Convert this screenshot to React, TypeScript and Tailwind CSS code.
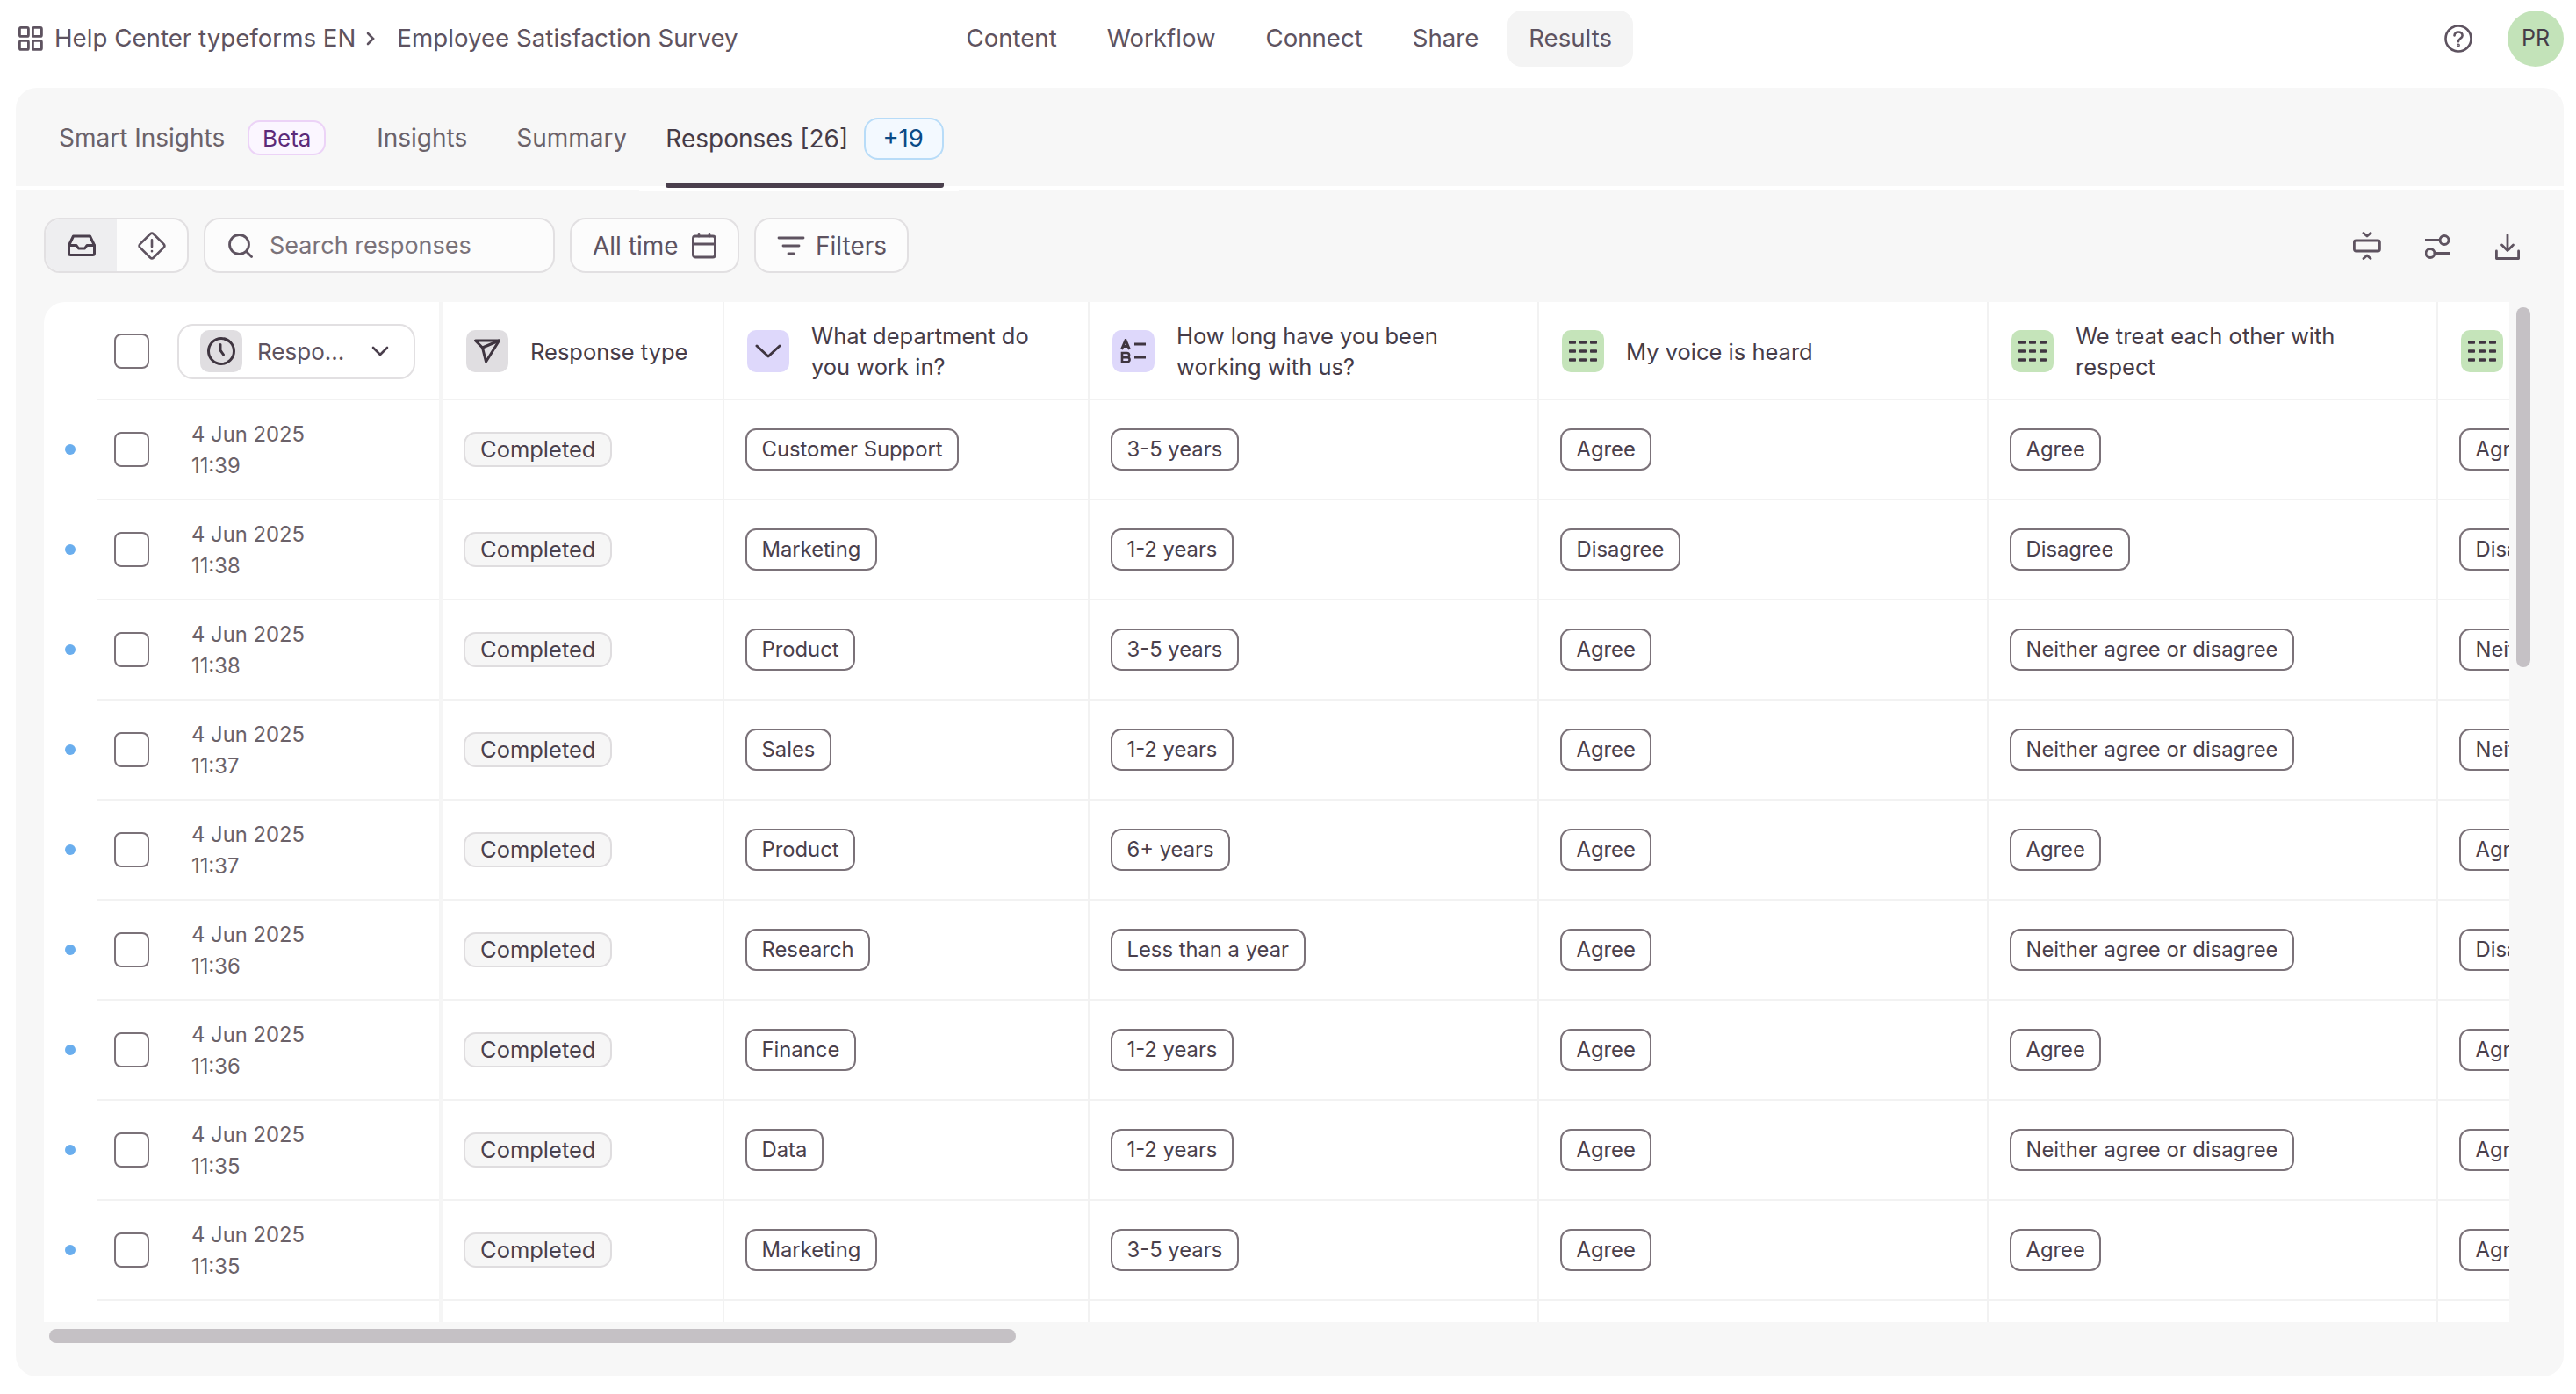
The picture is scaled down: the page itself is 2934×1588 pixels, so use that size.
const rows = [
  { time: "11:39", dept: "Customer Support", years: "3-5 years", voice: "Agree", respect: "Agree", next: "Agree" },
  { time: "11:38", dept: "Marketing", years: "1-2 years", voice: "Disagree", respect: "Disagree", next: "Disagree" },
  { time: "11:38", dept: "Product", years: "3-5 years", voice: "Agree", respect: "Neither agree or disagree", next: "Neither agree or disagree" },
  { time: "11:37", dept: "Sales", years: "1-2 years", voice: "Agree", respect: "Neither agree or disagree", next: "Neither agree or disagree" },
  { time: "11:37", dept: "Product", years: "6+ years", voice: "Agree", respect: "Agree", next: "Agree" },
  { time: "11:36", dept: "Research", years: "Less than a year", voice: "Agree", respect: "Neither agree or disagree", next: "Disagree" },
  { time: "11:36", dept: "Finance", years: "1-2 years", voice: "Agree", respect: "Agree", next: "Agree" },
  { time: "11:35", dept: "Data", years: "1-2 years", voice: "Agree", respect: "Neither agree or disagree", next: "Agree" },
  { time: "11:35", dept: "Marketing", years: "3-5 years", voice: "Agree", respect: "Agree", next: "Agree" },
];

function Checkbox() {
  return <div className="w-[40px] h-[40px] rounded-[8px] border-2 border-[#7b7279] bg-white shrink-0" />;
}

function Chip({ label }: { label: string }) {
  return (
    <span className="inline-flex items-center h-[48px] px-[16.5px] rounded-[12px] border-2 border-[#7b7279] text-[23.8px] text-[#4a404c] whitespace-nowrap bg-white">
      {label}
    </span>
  );
}

function MatrixIcon() {
  return (
    <span className="w-[48px] h-[48px] rounded-[10px] bg-[#c5e4ba] flex items-center justify-center shrink-0 ml-[2px]">
      <svg width="32" height="26" viewBox="0 0 32 26" fill="#3f3540">
        {[1.3, 11.3, 21.3].map((y) => [0, 12, 24].map((x) => <rect key={`${x}-${y}`} x={x} y={y} width="8" height="3.4" rx="0.8" />))}
      </svg>
    </span>
  );
}

function HeadCell({ icon, title, width, border = true }: { icon: React.ReactNode; title?: React.ReactNode; width: string; border?: boolean }) {
  return (
    <div className={`${width} shrink-0 h-full flex items-center gap-[25px] pl-[24px] pt-[2px] border-b-2 border-[#f2f2f2] ${border ? "border-r-2 border-r-[#f2f2f2]" : ""}`}>
      {icon}
      {title && <div className="text-[25.5px] leading-[35px] text-[#463c48]">{title}</div>}
    </div>
  );
}

function Cell({ children, width, border = true }: { children?: React.ReactNode; width: string; border?: boolean }) {
  return (
    <div className={`${width} shrink-0 h-full flex items-center pl-[24px] border-b-2 border-[#f2f2f2] overflow-hidden ${border ? "border-r-2 border-r-[#f2f2f2]" : ""}`}>
      {children}
    </div>
  );
}

export default function App() {
  const tabClass = "text-[28px] text-[#6b6269]";
  const btnClass = "h-[63px] rounded-[18px] border-2 border-[#e2e0e2] bg-[#fcfcfc] flex items-center";
  const navClass = "h-[64px] px-[24.5px] rounded-[16px] flex items-center text-[27.6px] text-[#5e5360]";

  return (
    <div className="w-[2934px] h-[1588px] bg-white overflow-hidden [font-family:Inter,sans-serif]">
      {/* top bar */}
      <div className="h-[100px] pt-[12px] flex items-start">
        <div className="w-[1076px] h-[64px] pl-[21px] flex items-center text-[27.7px] text-[#5e5360]">
          <svg width="28" height="28" viewBox="0 0 28 28" fill="none" stroke="#5e5360" strokeWidth="2.8" className="mr-[13px]">
            <rect x="1.4" y="1.4" width="10" height="10" rx="1.5" />
            <rect x="16.4" y="1.4" width="10" height="10" rx="1.5" />
            <rect x="1.4" y="16.4" width="10" height="10" rx="1.5" />
            <rect x="16.4" y="16.4" width="10" height="10" rx="1.5" />
          </svg>
          <span className="whitespace-nowrap">Help Center typeforms EN</span>
          <svg width="10" height="16" viewBox="0 0 10 16" fill="none" stroke="#5e5360" strokeWidth="2.6" strokeLinecap="round" className="ml-[12px] mr-[25px]">
            <path d="M2 2l6 6-6 6" />
          </svg>
          <span className="whitespace-nowrap">Employee Satisfaction Survey</span>
        </div>
        <div className="flex items-center gap-[8px]">
          <div className={navClass}>Content</div>
          <div className={navClass}>Workflow</div>
          <div className={navClass}>Connect</div>
          <div className={navClass}>Share</div>
          <div className={`${navClass} bg-[#f4f4f4]`}>Results</div>
        </div>
        <div className="ml-auto mr-[14px] h-[64px] flex items-center gap-[40px]">
          <svg width="32" height="32" viewBox="0 0 32 32" fill="none" stroke="#5e5360" strokeWidth="2.6" strokeLinecap="round">
            <circle cx="16" cy="16" r="14.5" />
            <path d="M11.5 12.5c.3-2.6 2.2-4 4.6-4 2.6 0 4.5 1.6 4.5 3.9 0 3.2-4.6 3.4-4.6 6.8" />
            <circle cx="16" cy="23.5" r="0.6" fill="#5e5360" />
          </svg>
          <div className="w-[64px] h-[64px] rounded-full bg-[#c3e3b9] flex items-center justify-center text-[25px] text-[#463c48]">PR</div>
        </div>
      </div>

      {/* panel */}
      <div className="ml-[18px] w-[2902px] h-[1468px] rounded-[24px] bg-[#f7f7f7] overflow-hidden">
        {/* tabs */}
        <div className="h-[116px] flex items-start border-b-[4px] border-white pl-[49px] relative">
          <div className="flex items-center h-[114px]">
            <span className={`${tabClass} whitespace-nowrap`}>Smart Insights</span>
            <span className="ml-[26px] w-[89px] h-[40px] rounded-[14px] border-2 border-[#ecd3f7] bg-[#fbf6ff] flex items-center justify-center text-[26px] text-[#5b2a78]">Beta</span>
            <span className={`${tabClass} ml-[58px]`}>Insights</span>
            <span className={`${tabClass} ml-[56px]`}>Summary</span>
          </div>
          <div className="ml-[44px] h-[114px] pt-[7px] flex items-center border-b-[6px] border-[#4a3f4d] rounded-b-[3px] shrink-0">
            <span className="text-[28px] text-[#463c48] whitespace-nowrap">Responses [26]</span>
            <span className="ml-[18px] w-[91px] h-[48px] rounded-[16px] border-2 border-[#b8dcf8] bg-[#f3f9ff] flex items-center justify-center text-[27.5px] text-[#0a4a86] pr-[2px]">+19</span>
          </div>
          <div className="absolute left-[710px] top-[116px] w-[364px] h-[2px] bg-white" />
        </div>

        {/* toolbar */}
        <div className="h-[128px] pl-[32px] pr-[48px] pt-[32px] flex items-start gap-[17px]">
          <div className={`${btnClass} w-[165px] overflow-hidden`}>
            <div className="w-[81px] h-full bg-[#eeeef0] flex items-center justify-center">
              <svg width="32" height="25" viewBox="0 0 32 25" fill="none" stroke="#4a3f4d" strokeWidth="3" strokeLinejoin="round" strokeLinecap="round">
                <path d="M1.5 12.5 6.5 2h19l5 10.5V21.5a2 2 0 0 1-2 2h-25a2 2 0 0 1-2-2z" />
                <path d="M1.5 12.5h8.5l2.5 3.5h7l2.5-3.5h8.5" />
              </svg>
            </div>
            <div className="flex-1 flex items-center justify-center">
              <svg width="32" height="32" viewBox="0 0 34 34" fill="none" stroke="#5e5360" strokeWidth="2.8" strokeLinecap="round" strokeLinejoin="round">
                <path d="M15 2.6a3 3 0 0 1 4 0l12.4 12.4a3 3 0 0 1 0 4L19 31.4a3 3 0 0 1-4 0L2.6 19a3 3 0 0 1 0-4z" />
                <path d="M17 10v8M17 23.5v.2" />
              </svg>
            </div>
          </div>
          <div className={`${btnClass} w-[400px] pl-[26px] gap-[19px]`}>
            <svg width="28" height="28" viewBox="0 0 28 28" fill="none" stroke="#5e5360" strokeWidth="2.8" strokeLinecap="round">
              <circle cx="12.5" cy="12.5" r="11" />
              <path d="M21 21l5.5 5.5" />
            </svg>
            <span className="text-[27px] text-[#7a7279] whitespace-nowrap pt-[2px]">Search responses</span>
          </div>
          <div className={`${btnClass} w-[193px] pl-[24px] gap-[15px]`}>
            <span className="text-[28px] text-[#5e5360] whitespace-nowrap">All time</span>
            <svg width="28" height="30" viewBox="0 0 28 30" fill="none" stroke="#5e5360" strokeWidth="2.8" strokeLinecap="round" strokeLinejoin="round">
              <rect x="1.4" y="4" width="25" height="24" rx="2.5" />
              <path d="M1.4 13h25M8 1.4V4M20 1.4V4" />
            </svg>
          </div>
          <div className={`${btnClass} w-[176px] pl-[24px] gap-[12px]`}>
            <svg width="32" height="24" viewBox="0 0 32 24" fill="none" stroke="#5e5360" strokeWidth="2.8" strokeLinecap="round">
              <path d="M2 3h28M7 12h18M13 21h6" />
            </svg>
            <span className="text-[28px] text-[#5e5360]">Filters</span>
          </div>
          <div className="ml-auto flex items-start gap-[50px] pt-[16px] pr-[2px]">
            <svg width="32" height="32" viewBox="0 0 32 32" fill="none" stroke="#5e5360" strokeWidth="2.8" strokeLinecap="round" strokeLinejoin="round">
              <path d="M12 1.5l4 3.5 4-3.5M12 30.5l4-3.5 4 3.5" />
              <rect x="1.4" y="10" width="29" height="12" rx="2" />
            </svg>
            <svg width="28" height="30" viewBox="0 0 28 30" fill="none" stroke="#5e5360" strokeWidth="2.8" strokeLinecap="round" className="mt-[2px]">
              <path d="M0 7.5h17M11 22.5h17" />
              <circle cx="22" cy="7.5" r="5" />
              <circle cx="6" cy="22.5" r="5" />
            </svg>
            <svg width="28" height="30" viewBox="0 0 28 30" fill="none" stroke="#5e5360" strokeWidth="2.8" strokeLinecap="round" strokeLinejoin="round" className="mt-[2px] ml-[2px]">
              <path d="M14 1.5v18M7.5 13l6.5 6.5 6.5-6.5" />
              <path d="M1.4 20v8.5h25.2V20" />
            </svg>
          </div>
        </div>

        {/* table */}
        <div className="ml-[32px] flex items-start">
          <div className="w-[2808px] h-[1162px] shrink-0 rounded-tl-[24px] bg-white overflow-hidden">
            <div className="h-[112px] flex">
              <div className="w-[454px] shrink-0 h-full flex border-r-4 border-[#f5f5f5]">
                <div className="w-[60px] shrink-0" />
                <div className="flex-1 flex items-center pl-[20px] pt-[2px] gap-[32px] border-b-2 border-[#f2f2f2]">
                  <Checkbox />
                  <div className="w-[271px] h-[63px] rounded-[18px] border-2 border-[#e2e0e2] bg-white flex items-center pl-[24px] shrink-0">
                    <span className="w-[48px] h-[48px] rounded-[10px] bg-[#e0dee1] flex items-center justify-center shrink-0">
                      <svg width="34" height="34" viewBox="0 0 34 34" fill="none" stroke="#3f3540" strokeWidth="3" strokeLinecap="round">
                        <circle cx="17" cy="17" r="14.5" />
                        <path d="M16 9.5V16l3.5 5" />
                      </svg>
                    </span>
                    <span className="ml-[17px] text-[26px] text-[#5e5360] w-[102px] whitespace-nowrap">Respo...</span>
                    <svg width="20" height="12" viewBox="0 0 20 12" fill="none" stroke="#4a3f4d" strokeWidth="2.6" strokeLinecap="round" strokeLinejoin="round" className="ml-[28px]">
                      <path d="M2 2l8 8 8-8" />
                    </svg>
                  </div>
                </div>
              </div>
              <HeadCell
                width="w-[321px]"
                title="Response type"
                icon={
                  <span className="w-[48px] h-[48px] rounded-[10px] bg-[#e0dee1] flex items-center justify-center shrink-0 ml-[3px]">
                    <svg width="30" height="28" viewBox="0 0 30 28" fill="none" stroke="#3f3540" strokeWidth="3" strokeLinejoin="round" strokeLinecap="round">
                      <path d="M1.5 2h27L13.5 26 9.5 10z" />
                      <path d="M9.5 10 28.5 2" />
                    </svg>
                  </span>
                }
              />
              <HeadCell
                width="w-[416px]"
                title={<>What department do<br />you work in?</>}
                icon={
                  <span className="w-[48px] h-[48px] rounded-[10px] bg-[#ded8fb] flex items-center justify-center shrink-0 ml-[2px]">
                    <svg width="30" height="18" viewBox="0 0 30 18" fill="none" stroke="#3f3540" strokeWidth="3" strokeLinecap="round" strokeLinejoin="round">
                      <path d="M2 3l13 12L28 3" />
                    </svg>
                  </span>
                }
              />
              <HeadCell
                width="w-[512px]"
                title={<>How long have you been<br />working with us?</>}
                icon={
                  <span className="w-[48px] h-[48px] rounded-[10px] bg-[#ded8fb] flex items-center justify-center shrink-0 ml-[2px]">
                    <svg width="30" height="28" viewBox="0 0 30 28" fill="none" stroke="#3f3540" strokeWidth="3">
                      <path d="M1.5 12 6 1.5 10.5 12M3 8.5h6" strokeLinejoin="round" />
                      <path d="M2 16h5.5a2.6 2.6 0 0 1 0 5.2H2zM2 21.2h6a2.6 2.6 0 0 1 0 5.2H2z" strokeWidth="2.6" />
                      <path d="M16 6h13M16 21h13" />
                    </svg>
                  </span>
                }
              />
              <HeadCell width="w-[512px]" title="My voice is heard" icon={<MatrixIcon />} />
              <HeadCell width="w-[512px]" title={<>We treat each other with<br />respect</>} icon={<MatrixIcon />} />
              <HeadCell width="w-[512px]" icon={<MatrixIcon />} border={false} />
            </div>
            {rows.map((r, i) => (
              <div key={i} className="h-[114px] flex">
                <div className="w-[454px] shrink-0 h-full flex border-r-4 border-[#f5f5f5]">
                  <div className="w-[60px] shrink-0 flex items-center pl-[24px] pb-[2px]">
                    <span className="w-[12px] h-[12px] rounded-full bg-[#6aaeee]" />
                  </div>
                  <div className="flex-1 flex items-center pl-[20px] gap-[48px] border-b-2 border-[#f2f2f2]">
                    <Checkbox />
                    <div className="text-[23.8px] leading-[36px] text-[#6b6269] pt-[2px]">
                      <div>4 Jun 2025</div>
                      <div>{r.time}</div>
                    </div>
                  </div>
                </div>
                <Cell width="w-[321px]">
                  <span className="h-[40px] px-[17px] rounded-[14px] border-2 border-[#dfdddf] bg-[#f6f6f6] flex items-center text-[25.5px] text-[#4a404c]">Completed</span>
                </Cell>
                <Cell width="w-[416px]"><Chip label={r.dept} /></Cell>
                <Cell width="w-[512px]"><Chip label={r.years} /></Cell>
                <Cell width="w-[512px]"><Chip label={r.voice} /></Cell>
                <Cell width="w-[512px]"><Chip label={r.respect} /></Cell>
                <Cell width="w-[512px]" border={false}><Chip label={r.next} /></Cell>
              </div>
            ))}
            <div className="h-[40px] flex">
              <div className="w-[454px] shrink-0 border-r-4 border-[#f5f5f5]" />
              <div className="w-[321px] shrink-0 border-r-2 border-[#f2f2f2]" />
              <div className="w-[416px] shrink-0 border-r-2 border-[#f2f2f2]" />
              <div className="w-[512px] shrink-0 border-r-2 border-[#f2f2f2]" />
              <div className="w-[512px] shrink-0 border-r-2 border-[#f2f2f2]" />
              <div className="w-[512px] shrink-0 border-r-2 border-[#f2f2f2]" />
            </div>
          </div>
          {/* vertical scrollbar */}
          <div className="ml-[8px] mt-[6px] w-[16px] h-[410px] rounded-full bg-[#c5c1c5]" />
        </div>
        {/* horizontal scrollbar */}
        <div className="ml-[38px] mt-[8px] w-[1101px] h-[16px] rounded-full bg-[#c5c1c5]" />
      </div>
    </div>
  );
}
